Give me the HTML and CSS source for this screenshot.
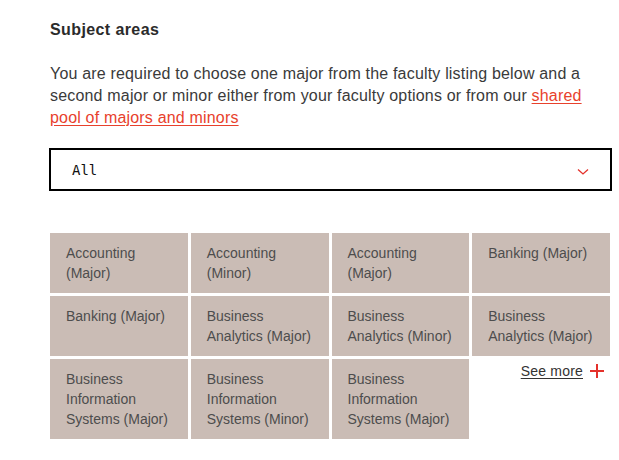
FILE: index.html
```html
<!DOCTYPE html>
<html>
<head>
<meta charset="utf-8">
<link rel="stylesheet" href="styles.css">
</head>
<body>
<div class="wrap">
  <h2 class="title">Subject areas</h2>
  <p class="intro">You are required to choose one major from the faculty listing below and a second major or minor either from your faculty options or from our <a href="#" class="link">shared pool of majors and minors</a></p>
  <div class="select">
    <span class="select-value">All</span>
    <svg class="chev" width="12" height="8" viewBox="0 0 12 8"><path d="M1 1.5 L6 6 L11 1.5" fill="none" stroke="#e4312b" stroke-width="1.3"/></svg>
  </div>
  <div class="grid">
    <div class="cell">Accounting (Major)</div>
    <div class="cell">Accounting (Minor)</div>
    <div class="cell">Accounting (Major)</div>
    <div class="cell">Banking (Major)</div>
    <div class="cell">Banking (Major)</div>
    <div class="cell">Business Analytics (Major)</div>
    <div class="cell">Business Analytics (Minor)</div>
    <div class="cell">Business Analytics (Major)</div>
    <div class="cell">Business Information Systems (Major)</div>
    <div class="cell">Business Information Systems (Minor)</div>
    <div class="cell">Business Information Systems (Major)</div>
    <div class="more-cell"><a href="#" class="more">See more <span class="plus"></span></a></div>
  </div>
</div>
</body>
</html>
```
FILE: styles.css
```css
html, body { margin: 0; padding: 0; background: #fff; }
body { font-family: "Liberation Sans", Arial, sans-serif; color: #333; }
.wrap { width: 563px; padding: 19px 0 0 49px; }
.title { margin: 0 0 0 1px; font-size: 16px; font-weight: bold; line-height: 22px; color: #2b2b2b; letter-spacing: 0.4px; }
.intro { margin: 22px 0 0 1px; font-size: 16px; line-height: 22px; color: #3a3a3a; letter-spacing: 0.18px; }
.link { color: #e8412c; text-decoration: underline; text-underline-offset: 2px; }
.select { margin-top: 19px; height: 39px; border: 2px solid #000; display: flex; align-items: center; justify-content: space-between; padding: 0 21px 0 21px; }
.select-value { font-family: "DejaVu Sans Mono", monospace; font-size: 14px; color: #111; }
.chev { margin-top: 4px; }
.grid { margin: 42px 0 0 1px; width: 560px; display: grid; grid-template-columns: repeat(4, 1fr); gap: 3px; }
.cell { background: #cabcb5; padding: 10px 8px 10px 16px; font-size: 14px; line-height: 20px; color: #4d4d4d; }
.more-cell { display: flex; justify-content: flex-end; padding: 2px 6px 0 0; }
.more { color: #333; font-size: 14px; line-height: 20px; text-decoration: underline; text-underline-offset: 2px; display: inline-flex; align-items: center; height: 20px; letter-spacing: 0.2px; }
.plus { display: inline-block; width: 14px; height: 14px; margin-left: 7px; position: relative; }
.plus::before, .plus::after { content: ""; position: absolute; background: #e4312b; }
.plus::before { left: 0; top: 6px; width: 14px; height: 2px; }
.plus::after { left: 6px; top: 0; width: 2px; height: 14px; }
```
